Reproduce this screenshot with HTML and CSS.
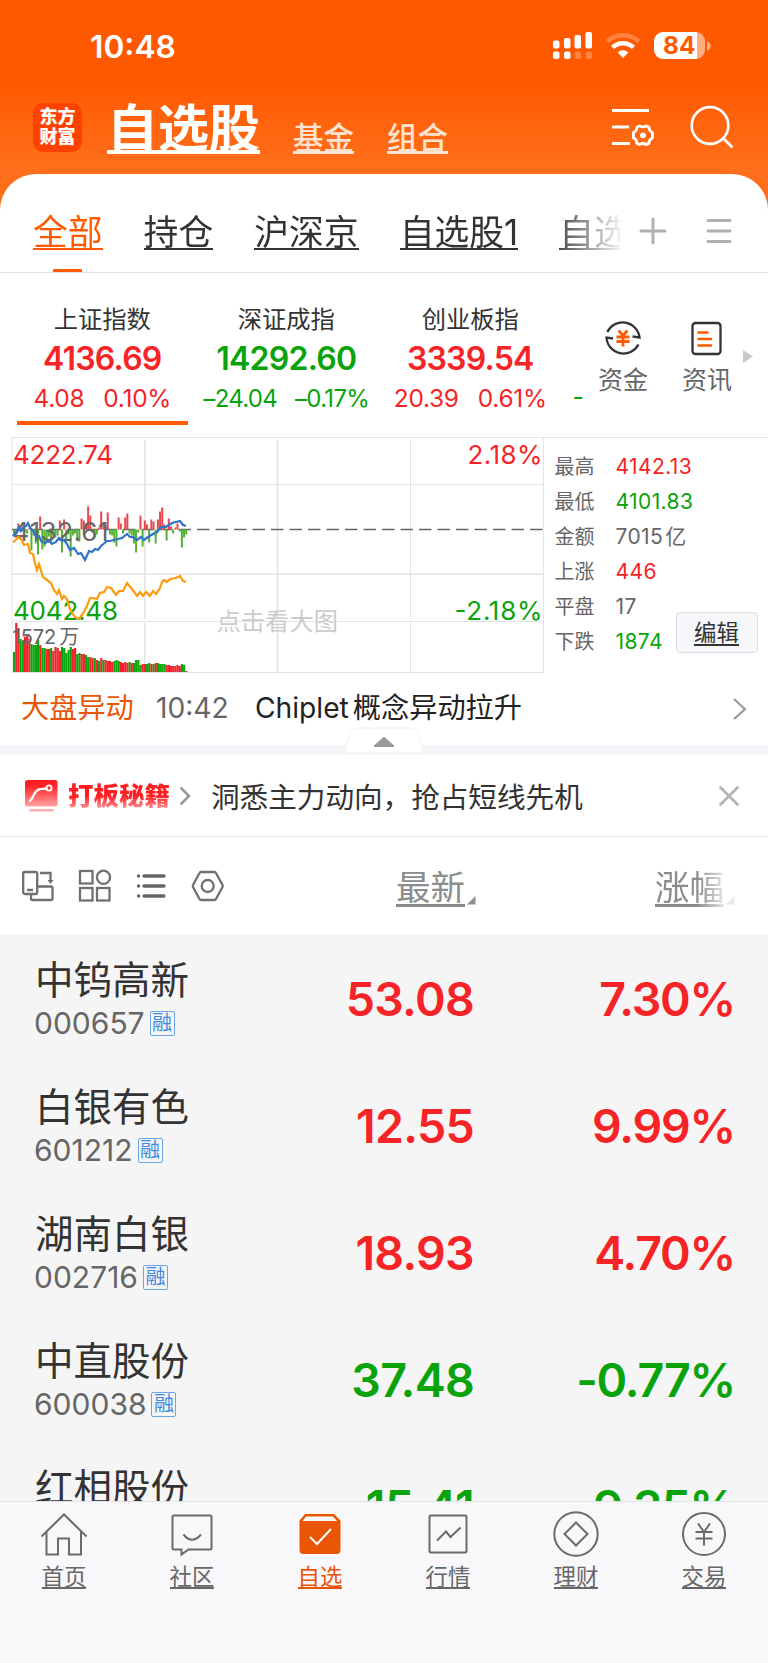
FILE: index.html
```
<!DOCTYPE html>
<html lang="zh-CN">
<head>
    <meta charset="UTF-8">
    <meta name="viewport" content="width=device-width, initial-scale=1.0">
    <title>自选股</title>
    <link rel="stylesheet" href="styles.css">
</head>
<body>
<div class="app">
    <header class="header">
        <div class="status">
            <span class="time">10:48</span>
            <svg class="signal" width="40" height="28" viewBox="0 0 40 28" fill="#fff">
                <rect x="0" y="8.5" width="6.5" height="8" rx="2"/>
                <rect x="11" y="6" width="6.5" height="10.5" rx="2"/>
                <rect x="21.5" y="3" width="6.5" height="13.5" rx="2"/>
                <rect x="32.5" y="0" width="6.5" height="16.5" rx="2"/>
                <rect x="0" y="19.5" width="6.5" height="7.5" rx="2"/>
                <rect x="11" y="19.5" width="6.5" height="7.5" rx="2"/>
                <g opacity=".25">
                    <rect x="21.5" y="19.5" width="6.5" height="7.5" rx="2"/>
                    <rect x="32.5" y="19.5" width="6.5" height="7.5" rx="2"/>
                </g>
            </svg>
            <svg class="wifi" width="36" height="28" viewBox="0 0 36 28" fill="none" stroke="#fff" stroke-width="4.6">
                <path d="M2.2 9.6a23 23 0 0 1 31.6 0" opacity=".25"/>
                <path d="M7.6 15.4a15 15 0 0 1 20.8 0"/>
                <path d="M18 26l-5.3-5.5a7.6 7.6 0 0 1 10.6 0z" fill="#fff" stroke="none"/>
            </svg>
            <div class="battery"><span>84</span></div>
            <svg class="battery-tip" width="4" height="10" viewBox="0 0 4 10"><path d="M0 0c5 2 5 8 0 10z" fill="#fff" opacity=".5"/></svg>
        </div>
        <div class="titlebar">
            <div class="logo"><span>东方</span><span>财富</span></div>
            <a class="title">自选股</a>
            <a class="subtitle">基金</a>
            <a class="subtitle">组合</a>
            <svg class="icon-filter" width="44" height="40" viewBox="0 0 44 40" fill="none" stroke="#fff" stroke-width="3">
                <path d="M0 2.5h37M0 19h17M0 35.5h18"/>
                <path d="M27.3 17.2q3.7 2.2 7.4 0l2.6 1.4q.2 4 3.7 5.6v6q-3.5 1.6-3.7 5.6l-2.6 1.4q-3.7-2.2-7.4 0l-2.6-1.4q-.2-4-3.7-5.6v-6q3.5-1.6 3.7-5.6z" stroke-width="3" stroke-linejoin="round" transform="translate(1.5 1.9) scale(.95 .93)"/>
                <circle cx="31" cy="27.3" r="2.9" fill="#fff" stroke="none"/>
            </svg>
            <svg class="icon-search" width="44" height="44" viewBox="0 0 44 44" fill="none" stroke="#fff" stroke-width="2.7">
                <circle cx="20" cy="20.5" r="18.3"/><path d="M33 33l9.5 9.5"/>
            </svg>
        </div>
    </header>

    <main class="panel">
        <nav class="tabs">
            <div class="tabs-scroll">
                <a class="tab active">全部</a>
                <a class="tab">持仓</a>
                <a class="tab">沪深京</a>
                <a class="tab">自选股1</a>
                <a class="tab">自选股2</a>
            </div>
            <svg class="icon-plus" width="28" height="28" viewBox="0 0 28 28" stroke="#b0b0b0" stroke-width="3" stroke-linecap="round"><path d="M2 14h24M14 2v24"/></svg>
            <svg class="icon-menu" width="26" height="26" viewBox="0 0 26 26" stroke="#b0b0b0" stroke-width="3" stroke-linecap="round"><path d="M2 2.5h22M2 13h22M2 23.5h22"/></svg>
        </nav>

        <section class="indices">
            <div class="index-scroll">
                <div class="index selected">
                    <div class="index-name">上证指数</div>
                    <div class="index-value up">4136.69</div>
                    <div class="index-change up"><span>4.08</span><span>0.10%</span></div>
                </div>
                <div class="index">
                    <div class="index-name">深证成指</div>
                    <div class="index-value down">14292.60</div>
                    <div class="index-change tight down"><span>–24.04</span><span>–0.17%</span></div>
                </div>
                <div class="index">
                    <div class="index-name">创业板指</div>
                    <div class="index-value up">3339.54</div>
                    <div class="index-change up"><span>20.39</span><span>0.61%</span></div>
                </div>
                <div class="index next">
                    <div class="index-change down"><span>-</span></div>
                </div>
            </div>
            <div class="shortcut">
                <svg width="38" height="38" viewBox="0 0 38 38" fill="none" stroke="#333" stroke-width="2.3">
                    <path d="M3.3 13A17 17 0 0 1 35.5 18.5l-7-1.2M34.5 25.5A17 17 0 0 1 2.5 18.5l6.5 1"/>
                    <path d="M14.5 11.5l4.5 5 4.5-5M12.5 18h13M12.5 22.5h13M19 16.5v11" stroke="#ff5a00" stroke-width="2.8"/>
                </svg>
                <span>资金</span>
            </div>
            <div class="shortcut">
                <svg width="38" height="38" viewBox="0 0 38 38" fill="none" stroke="#333" stroke-width="2.3">
                    <rect x="4.5" y="4" width="28" height="31" rx="3"/>
                    <path d="M10.5 13.5h9M10.5 20h12.5M10.5 26.5h12.5" stroke="#ff5a00" stroke-width="2.6" stroke-linecap="round"/>
                </svg>
                <span>资讯</span>
            </div>
            <svg class="more" width="10" height="13" viewBox="0 0 10 13"><path d="M0 0l10 6.5L0 13z" fill="#c8c8c8"/></svg>
        </section>

        <section class="market">
            <svg class="chart" id="chart" width="534" height="238" viewBox="11 436 534 238">
                <g class="grid">
                    <path d="M11 437.5H545M12 484.5H543M12 621.5H543M12 672.5H543M12 437V673M543.5 437V673M410.5 440V619M410.5 623V673"/>
                    <path d="M12 574.3H543M144.8 440V619M144.8 623V673M277.5 440V619M277.5 623V673" class="thick"/>
                </g>
                <path class="mid" d="M12 529.5H543"/>
                <text class="hint" x="216.5" y="630">点击看大图</text>
                <g id="bars"></g>
                <text class="label up" x="13" y="463.5" textLength="100">4222.74</text>
                <text class="label up" x="542.5" y="463.5" text-anchor="end" textLength="75">2.18%</text>
                <text class="label flat" x="12.5" y="541" textLength="96">4132.61</text>
                <text class="label down" x="13" y="620" textLength="105">4042.48</text>
                <text class="label down" x="542.5" y="620" text-anchor="end" textLength="88">-2.18%</text>
                <text class="volume flat" x="12.5" y="643.5">1572<tspan dx="3">万</tspan></text>
                <polyline class="price" points="13,536 17,531 19,527 21,531 24,527 26,526 28,523 30,528 33,531 36,537 39,536 41,541 45,543 49,541 52,544 56,542 59,538 62,541 64,540 67,544 70,550 74,548 78,554 81,553 85,560 89,551 92,552 95,549 98,550 101,546 107,541 110,541 114,540 118,539 122,538 127,534 130,537 133,537 137,540 141,537 144,540 148,537 153,534 157,532 161,527 166,527 172,523 180,521 183,525 186,526"/>
                <polyline class="average" points="13,542 15,541 18,537 21,539 24,545 28,544 30,553 33,554 35,563 37,570 39,564 43,577 51,583 54,590 57,594 59,590 62,599 64,596 67,599 70,609 72,613 75,617 79,619 84,612 87,606 90,598 93,598 97,599 100,593 104,592 107,587 111,588 116,595 119,591 123,591 127,583 132,589 137,596 140,592 143,596 146,592 150,596 153,591 156,594 160,588 162,582 164,580 167,582 170,579 176,578 180,576 183,581 186,582"/>
            </svg>
            <div class="stats">
                <div class="stat"><span>最高</span><b class="up">4142.13</b></div>
                <div class="stat"><span>最低</span><b class="down">4101.83</b></div>
                <div class="stat"><span>金额</span><b>7015<i></i>亿</b></div>
                <div class="stat"><span>上涨</span><b class="up">446</b></div>
                <div class="stat"><span>平盘</span><b>17</b></div>
                <div class="stat"><span>下跌</span><b class="down">1874</b></div>
                <button class="edit"><u>编辑</u></button>
            </div>
        </section>

        <section class="news">
            <span class="news-tag">大盘异动</span>
            <span class="news-time">10:42</span>
            <span class="news-text">Chiplet<i></i>概念异动拉升</span>
            <svg width="14" height="22" viewBox="0 0 14 22" fill="none" stroke="#999" stroke-width="2.2"><path d="M1 1l11 10.2L1 21"/></svg>
        </section>
        <div class="divider">
            <svg class="collapse" width="80" height="27" viewBox="0 0 80 27">
                <path d="M1 26C4 10 5 1 15 1H65C75 1 76 10 79 26z" fill="#fff" stroke="#eeeff2"/>
                <path d="M30 18.5L39 10.5q1-.8 2 0L50 18.5q.5 1.5-1 1.5H31q-1.5 0-1-1.5z" fill="#999"/>
            </svg>
        </div>

        <section class="promo">
            <svg width="33" height="32" viewBox="0 0 33 32" fill="none">
                <defs>
                    <linearGradient id="red" x1="0" y1="0" x2="0" y2="1">
                        <stop offset=".2" stop-color="#ff1f23"/><stop offset="1" stop-color="#ffa4a5"/>
                    </linearGradient>
                </defs>
                <rect width="32.5" height="26.5" rx="2.5" fill="url(#red)"/>
                <rect x="4" y="29" width="25" height="2.5" rx="1" fill="#ffb0b2"/>
                <path d="M5 21c3.5-3 4-10.5 10-11.8 2-.4 4-.2 6.5-.7" stroke="#fff" stroke-width="2.3" stroke-linecap="round"/>
                <circle cx="24" cy="8" r="2.6" stroke="#fff" stroke-width="1.8"/>
            </svg>
            <strong>打板秘籍</strong>
            <svg class="arrow" width="12" height="20" viewBox="0 0 12 20" fill="none" stroke="#999" stroke-width="2.5"><path d="M1.5 1.5l8.5 8.5-8.5 8.5"/></svg>
            <span>洞悉主力动向，抢占短线先机</span>
            <svg class="close" width="20" height="20" viewBox="0 0 20 20" stroke="#b3b3b3" stroke-width="2.7" stroke-linecap="round"><path d="M1.5 1.5l17 17M18.5 1.5l-17 17"/></svg>
        </section>

        <section class="toolbar">
            <svg width="32" height="32" viewBox="0 0 32 32" fill="none" stroke="#707070" stroke-width="2.3">
                <rect x="1.2" y="2" width="14" height="22" rx="1.5"/><path d="M5 20h6M18 3h10.5v8M9 25v3.5q0 1.5 1.5 1.5h18.5q1.5 0 1.5-1.5V18q0-1.5-1.5-1.5H16"/><path d="M25.5 10h6l-3 4z" fill="#707070" stroke="none"/>
            </svg>
            <svg width="34" height="34" viewBox="0 0 34 34" fill="none" stroke="#707070" stroke-width="2.3">
                <rect x="2" y="2" width="12.5" height="12.5"/><circle cx="25.5" cy="8.3" r="6.6"/><rect x="2" y="19" width="12.5" height="12.5"/><rect x="19" y="19" width="12.5" height="12.5"/>
            </svg>
            <svg width="30" height="28" viewBox="0 0 30 28" fill="none" stroke="#666" stroke-width="3.3" stroke-linecap="round">
                <path d="M8 4h20M8 14h20M8 24h20M2.5 4h.1M2.5 14h.1M2.5 24h.1"/>
            </svg>
            <svg width="34" height="32" viewBox="0 0 34 32" fill="none" stroke="#707070" stroke-width="2.3" stroke-linejoin="round">
                <path d="M10 2h13.5q1 0 1.5 1l6.5 12q.5 1 0 2l-6.5 12q-.5 1-1.5 1H10q-1 0-1.5-1L2 17q-.5-1 0-2L8.5 3Q9 2 10 2z"/><circle cx="16.7" cy="16" r="6"/>
            </svg>
            <div class="sort latest"><a>最新</a><svg width="9" height="9"><path d="M8.5 0v8.5H0z" fill="#8e8e93"/></svg></div>
            <div class="sort change"><a>涨幅</a><svg width="9" height="9"><path d="M8.5 0v8.5H0z" fill="#8e8e93"/></svg></div>
        </section>

        <section class="stocks">
            <div class="stock">
                <div><div class="name">中钨高新</div><div class="code">000657<em>融</em></div></div>
                <div class="num up">53.08</div><div class="num percent up">7.30%</div>
            </div>
            <div class="stock">
                <div><div class="name">白银有色</div><div class="code">601212<em>融</em></div></div>
                <div class="num up">12.55</div><div class="num percent up">9.99%</div>
            </div>
            <div class="stock">
                <div><div class="name">湖南白银</div><div class="code">002716<em>融</em></div></div>
                <div class="num up">18.93</div><div class="num percent up">4.70%</div>
            </div>
            <div class="stock">
                <div><div class="name">中直股份</div><div class="code">600038<em>融</em></div></div>
                <div class="num down">37.48</div><div class="num percent down">-0.77%</div>
            </div>
            <div class="stock">
                <div><div class="name">红相股份</div></div>
                <div class="num down">15.41</div><div class="num percent down">-9.35%</div>
            </div>
        </section>
    </main>

    <footer class="tabbar">
        <a>
            <svg width="48" height="48" viewBox="0 0 48 48"><path d="M1.5 25.5L24 3.5l22.5 22M6.5 21v22.5h11.5V27.5h11V43.5h12V21"/></svg>
            <span>首页</span>
        </a>
        <a>
            <svg width="48" height="48" viewBox="0 0 48 48"><path d="M6 4.5h36q1.5 0 1.5 1.5v31q0 1.5-1.5 1.5H20.5l-7 5v-5H6q-1.5 0-1.5-1.5V6q0-1.5 1.5-1.5zM15.500 23.500q8.500 10.500 17.500 0"/></svg>
            <span>社区</span>
        </a>
        <a class="current">
            <svg width="48" height="48" viewBox="0 0 48 48"><path d="M4.5 10L9.5 4h28l6 6v29q0 3-3 3h-33q-3 0-3-3z" fill="#ea5504"/><path d="M10 5.5h27l4 4.5H6.5z" class="white"/><path d="M14 26l7 7 14-15" class="check"/></svg>
            <span>自选</span>
        </a>
        <a>
            <svg width="48" height="48" viewBox="0 0 48 48"><rect x="5.5" y="4.5" width="37" height="37" rx="1.5"/><path d="M13 29.5l9-9 4.5 5.5 10-9.5"/></svg>
            <span>行情</span>
        </a>
        <a>
            <svg width="48" height="48" viewBox="0 0 48 48"><circle cx="24" cy="23" r="21.7"/><path d="M24 11.5L35.5 23 24 34.5 12.5 23z"/></svg>
            <span>理财</span>
        </a>
        <a>
            <svg width="48" height="48" viewBox="0 0 48 48"><circle cx="24" cy="23" r="21"/><path d="M18 12.5l6 8.5 6-8.5M15.5 21h17M15.5 27.5h17M24 21v13.5"/></svg>
            <span>交易</span>
        </a>
    </footer>
</div>

<script>
    const RED = '#f5222d', GREEN = '#0aa50f';
    const STEP = 2.18, LEFT = 13, ZERO = 529.5, BOTTOM = 672;

    // r = 涨, g = 跌，数字为成交量柱高
    const volumes = ('g20 r49 r44 g33 g31 r35 r37 r33 g28 g27 g27 g32 r27 g24 g24 r23 r23 g24 r21 r25 r24 r21 g25 g24 g19 g22 g25 r23 r24 g18 g19 ' +
        'r18 r18 g17 g15 r15 r14 g14 r12 g11 r14 g12 r12 r11 r11 r10 g11 g12 g11 r10 r9 r10 r9 g10 r9 g9 g12 g12 g7 r8 r8 g8 g9 r8 ' +
        'g8 r9 g9 g8 g8 g8 r7 r7 r6 r6 r6 r7 r6 g8 g7 r1').split(' ');

    // 中轴上下的红绿柱，负值向下
    const strength = [-4, -3, 6, -2, 3, -2, -4, 1, -21, -6, -14, -25, 13, -20, -17, -12, -7, -14, -5, -8, -6, 9, -23, 10, -12, -5, -27,
        -6, -4, -10, -12, 11, 9, 6, 23, 14, -3, -8, -5, 2, 18, 5, 3, 17, -5, -6, -13, -17, 12, 6, -4, 12, 16, -4, -6, -14, -23,
        -3, 14, -17, 9, 5, -13, 10, 8, -14, 10, 18, 22, 5, -11, 11, 3, -4, 2, 6, -2, -18, -8, -5];

    let html = '';
    volumes.forEach((v, i) => {
        const h = Number(v.slice(1));
        html += `<rect x="${LEFT + i * STEP}" y="${BOTTOM - h}" width="2.2" height="${h}" fill="${v[0] === 'r' ? RED : GREEN}"/>`;
    });
    strength.forEach((s, i) => {
        html += `<rect x="${LEFT + i * STEP}" y="${s > 0 ? ZERO - s : ZERO}" width="2" height="${Math.abs(s)}" fill="${s > 0 ? '#e9474c' : '#54b035'}"/>`;
    });
    document.getElementById('bars').innerHTML = html;
</script>
</body>
</html>
```
FILE: styles.css
```
* {
    box-sizing: border-box;
}
body {
    margin: 0;
    font-family: Inter, "Noto Sans CJK SC", sans-serif;
    color: #333;
}
svg {
    display: block;
    flex-shrink: 0;
}
.app {
    width: 768px;
    height: 1663px;
    display: flex;
    flex-direction: column;
    overflow: hidden;
    background: linear-gradient(#ff5900 80px, #ff6e1a 165px, #ff6e1a 240px, #fff 240px);
}
.up {
    color: #f62426;
    fill: #f62426;
}
.down {
    color: #09a30c;
    fill: #09a30c;
}
.flat {
    fill: #666;
}

/* header */
.header {
    height: 174px;
    color: #fff;
}
.status {
    height: 91px;
    padding-left: 90px;
    display: flex;
    align-items: center;
}
.time {
    width: 463px;
    padding-top: 2px;
    font-size: 31.7px;
    font-weight: 600;
}
.wifi {
    margin-left: 12px;
}
.battery {
    width: 51px;
    height: 27px;
    margin-left: 13px;
    border-radius: 9px;
    background: linear-gradient(90deg, #fff 43px, rgba(255, 255, 255, .5) 43px);
    color: #ff5900;
    font-size: 24.5px;
    font-weight: 700;
    line-height: 27px;
    padding-left: 9px;
}
.battery-tip {
    margin-left: 2px;
}
.titlebar {
    display: flex;
    padding-left: 33px;
    align-items: flex-start;
}
.logo {
    width: 49px;
    height: 49px;
    margin-top: 12px;
    padding-top: 4px;
    border-radius: 10px;
    background: #ff4200;
    display: flex;
    flex-direction: column;
    align-items: center;
    font-size: 18px;
    line-height: 20px;
    font-weight: 800;
}
.title {
    height: 49px;
    margin: 14px 33px 0 25px;
    font-size: 51px;
    line-height: 48px;
    font-weight: 700;
    border-bottom: 4px solid #fff;
}
.subtitle {
    height: 32px;
    margin: 31px 33px 0 0;
    font-size: 30.5px;
    line-height: 31px;
    font-weight: 500;
    color: #ffe3d2;
    border-bottom: 3px solid #ffe3d2;
}
.icon-filter {
    margin: 17px 34px 0 131px;
}
.icon-search {
    margin-top: 14px;
}

/* tabs */
.panel {
    flex: 1;
    min-height: 0;
    display: flex;
    flex-direction: column;
    background: #fff;
    border-radius: 36px 36px 0 0;
    overflow: hidden;
}
.tabs {
    height: 99px;
    flex-shrink: 0;
    display: flex;
    border-bottom: 1px solid #e4e4e6;
}
.tabs-scroll {
    width: 620px;
    padding-left: 33px;
    display: flex;
    gap: 41px;
    overflow: hidden;
    white-space: nowrap;
    -webkit-mask: linear-gradient(90deg, #000 550px, transparent 625px);
    mask: linear-gradient(90deg, #000 550px, transparent 625px);
}
.tab {
    height: 76px;
    padding-top: 41px;
    flex-shrink: 0;
    font-size: 34.8px;
    line-height: 34px;
    border-bottom: 2px solid #333;
    position: relative;
}
.tab.active {
    color: #ff5a00;
    border-color: #ff5a00;
}
.tab.active::after {
    content: "";
    position: absolute;
    left: 20px;
    top: 95px;
    width: 29px;
    height: 4px;
    border-radius: 1px;
    background: #ff5a00;
}
.icon-plus {
    margin: 43px 0 0 19px;
}
.icon-menu {
    margin: 44px 0 0 39px;
}

/* indices */
.indices {
    height: 164px;
    flex-shrink: 0;
    display: flex;
}
.index-scroll {
    width: 583px;
    padding-left: 16.5px;
    display: flex;
    gap: 12.5px;
    overflow: hidden;
}
.index {
    width: 171.5px;
    height: 151.5px;
    padding-top: 31px;
    flex-shrink: 0;
    text-align: center;
}
.index.selected {
    border-bottom: 4px solid #ff5a00;
}
.index-name {
    font-size: 24.3px;
    line-height: 30px;
}
.index-value {
    font-size: 32px;
    line-height: 49px;
    font-weight: 600;
    letter-spacing: -.75px;
}
.index-change {
    display: flex;
    justify-content: center;
    gap: 19px;
    margin: 0 -10px;
    font-size: 24.5px;
    line-height: 31px;
    letter-spacing: -.3px;
}
.index-change.tight {
    gap: 18px;
    font-size: 24px;
    letter-spacing: -.7px;
}
.index.next {
    padding-top: 109px;
}
.index.next .index-change {
    justify-content: flex-start;
    margin-left: 4px;
}
.shortcut {
    width: 84px;
    padding-top: 46px;
    display: flex;
    flex-direction: column;
    align-items: center;
    color: #666;
    position: relative;
    left: -2px;
}
.shortcut span {
    font-size: 25px;
    line-height: 47px;
}
.more {
    margin-top: 77px;
    margin-left: -8px;
}

/* market */
.market {
    height: 238px;
    margin-top: -1px;
    padding-left: 10.5px;
    flex-shrink: 0;
    display: flex;
}
.grid path {
    fill: none;
    stroke: #e2e4ec;
    stroke-width: 1;
}
.grid .thick {
    stroke-width: 1.6;
}
.mid {
    stroke: #666;
    stroke-width: 1.3;
    stroke-dasharray: 12.5 6;
}
.label {
    font-size: 26px;
}
.volume {
    font-size: 20px;
}
.hint {
    font-size: 24.3px;
    fill: #ccc;
}
.price,
.average {
    fill: none;
    stroke: #2f74c8;
    stroke-width: 2.2;
}
.average {
    stroke: #ff9a0a;
}
.stats {
    flex: 1;
    padding: 12px 0 0 10px;
    border-top: 1px solid #e2e4ec;
    margin-top: 1px;
    color: #666;
    font-size: 20px;
    position: relative;
}
.stat {
    display: flex;
    line-height: 34.9px;
}
.stat span {
    width: 61px;
}
.stat b {
    font-weight: 400;
    font-size: 21px;
    letter-spacing: .4px;
}
.stat i {
    display: inline-block;
    width: 2px;
}
.edit {
    position: absolute;
    left: 131px;
    top: 174px;
    width: 82px;
    height: 41px;
    padding: 0;
    border: 1px solid #dcdee4;
    border-radius: 4px;
    background: #f6f7fa;
    font-family: inherit;
    font-size: 22.4px;
    color: #333;
}
.edit u {
    display: inline-block;
    line-height: 22px;
    text-decoration: none;
    border-bottom: 2px solid #333;
}

/* news */
.news {
    height: 71px;
    flex-shrink: 0;
    padding: 0 0 2px 21px;
    display: flex;
    align-items: center;
    font-size: 28.2px;
    line-height: 69px;
}
.news-tag {
    width: 135px;
    color: #ea5504;
}
.news-time {
    width: 99px;
    color: #666;
}
.news-text {
    width: 478px;
    color: #222;
}
.news-text i {
    display: inline-block;
    width: 4px;
}
.divider {
    height: 10px;
    flex-shrink: 0;
    background: #f5f6fa;
    position: relative;
}
.collapse {
    position: absolute;
    left: 344px;
    top: -18px;
}

/* promo */
.promo {
    height: 82px;
    flex-shrink: 0;
    padding-left: 25px;
    display: flex;
    align-items: center;
    border-bottom: 1px solid #e8e8e8;
}
.promo strong {
    margin-left: 10px;
    width: 102px;
    font-size: 25.5px;
    line-height: 30px;
    font-weight: 900;
    color: transparent;
    background: linear-gradient(#ff1f23 50%, #ff9a9c 95%);
    -webkit-background-clip: text;
    background-clip: text;
}
.promo .arrow {
    margin-left: 9px;
}
.promo span {
    width: 508px;
    margin-left: 20px;
    font-size: 28.6px;
}

/* toolbar */
.toolbar {
    height: 97px;
    flex-shrink: 0;
    padding-left: 22px;
    display: flex;
    align-items: center;
}
.toolbar > svg:nth-child(2) {
    margin-left: 24px;
}
.toolbar > svg:nth-child(3) {
    margin-left: 24px;
}
.toolbar > svg:nth-child(4) {
    margin-left: 25px;
}
.sort {
    display: flex;
    align-items: flex-end;
    gap: 2px;
    padding-top: 5px;
    color: #8c8c8c;
    font-size: 34.5px;
    line-height: 36px;
}
.sort a {
    height: 37px;
    border-bottom: 3px solid #8c8c8c;
}
.sort svg {
    margin-bottom: 2px;
}
.latest {
    margin-left: 171px;
}
.change {
    margin-left: 179px;
    -webkit-mask: linear-gradient(90deg, #000 42px, rgba(0, 0, 0, .2) 70px);
    mask: linear-gradient(90deg, #000 42px, rgba(0, 0, 0, .2) 70px);
}

/* stocks */
.stocks {
    flex: 1;
    min-height: 0;
    padding-top: 1px;
    overflow: hidden;
    background: #f5f5f5;
}
.stock {
    height: 127px;
    margin: 0 11px 0 34px;
    padding-right: 22px;
    display: grid;
    grid-template-columns: 190px 250px 1fr;
    border-bottom: 1px solid #f0f0f0;
}
.name {
    margin: 21px 0 0 1px;
    font-size: 38.5px;
    line-height: 48px;
}
.code {
    display: flex;
    align-items: center;
    gap: 5px;
    font-size: 30px;
    line-height: 38px;
    color: #666;
}
.code em {
    width: 25px;
    height: 25px;
    border: 1px solid #6aa5e6;
    border-radius: 2px;
    font-style: normal;
    font-size: 20px;
    line-height: 23px;
    text-align: center;
    color: #3d8ae0;
}
.num {
    font-size: 46.5px;
    font-weight: 600;
    line-height: 129px;
    text-align: right;
    letter-spacing: -.7px;
}
.num.percent {
    letter-spacing: -1.2px;
}

/* bottom bar */
.tabbar {
    height: 162px;
    flex-shrink: 0;
    display: flex;
    background: #f8f8fb;
    border-top: 1px solid #e2e3e9;
}
.tabbar a {
    flex: 1;
    padding-top: 9px;
    display: flex;
    flex-direction: column;
    align-items: center;
    color: #666;
}
.tabbar svg {
    fill: none;
    stroke: #6b6b6b;
    stroke-width: 2;
}
.tabbar span {
    height: 23px;
    margin-top: 7px;
    font-size: 22.4px;
    line-height: 22px;
    border-bottom: 2px solid #666;
}
.tabbar .current {
    color: #ea5504;
}
.tabbar .current svg {
    stroke: #ea5504;
}
.tabbar .current .white {
    fill: #fff;
    stroke: none;
}
.tabbar .current .check {
    stroke: #fff;
    stroke-width: 2;
}
.tabbar .current span {
    border-color: #ea5504;
}
```
